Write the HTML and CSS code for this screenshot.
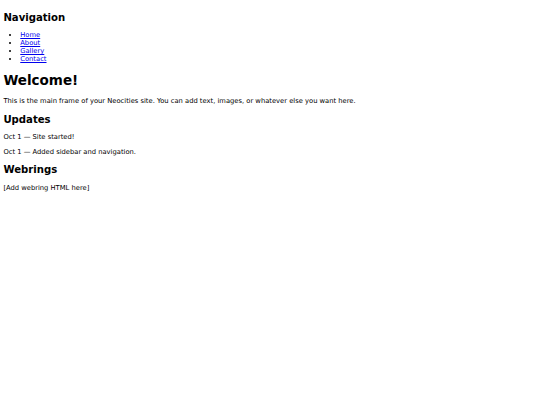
FILE: index.html
```html
<!DOCTYPE html>
<html>
<head>
<meta charset="utf-8">
<link rel="stylesheet" href="styles.css">
</head>
<body>
<div class="sidebar">
<h2>Navigation</h2>
<ul>
<li><a href="#">Home</a></li>
<li><a href="#">About</a></li>
<li><a href="#">Gallery</a></li>
<li><a href="#">Contact</a></li>
</ul>
</div>
<div class="main">
<h1>Welcome!</h1>
<p>This is the main frame of your Neocities site. You can add text, images, or whatever else you want here.</p>
<h2>Updates</h2>
<p>Oct 1 — Site started!</p>
<p>Oct 1 — Added sidebar and navigation.</p>
<h2>Webrings</h2>
<p>[Add webring HTML here]</p>
</div>
</body>
</html>
```
FILE: styles.css
```css
html { background: #fff; }
body {
  margin: 3.375px;
  font-family: "DejaVu Sans", sans-serif;
  font-size: 6.75px;
  color: #000;
}
h1 { font-size: 2em; margin: 0.67em 0; }
h2 { font-size: 1.5em; margin: 0.83em 0; }
p { margin: 1em 0; }
ul { margin: 1em 0; padding-left: 16.875px; }
a { color: #00e; }
```
